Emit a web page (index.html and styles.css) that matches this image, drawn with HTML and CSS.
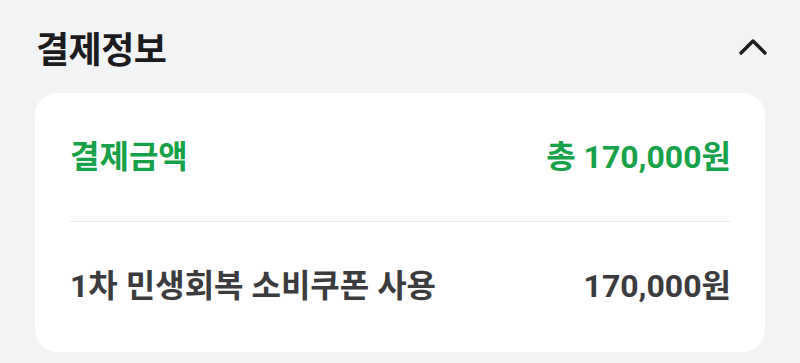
FILE: index.html
```html
<!DOCTYPE html>
<html lang="ko">

<head>
    <meta charset="UTF-8">
    <meta name="viewport" content="width=device-width, initial-scale=1.0">
    <title>결제정보</title>
    <link rel="stylesheet" href="styles.css">
</head>

<body>
    <div id="main">
        <div class="head">
            <div class="head-title">결제정보</div>
            <svg class="chevron" width="30" height="20" viewBox="0 0 30 20">
                <polyline points="3,16 15,4 27,16" fill="none" stroke="#1c1c1e" stroke-width="3.4"
                    stroke-linecap="round" stroke-linejoin="round" />
            </svg>
        </div>
        <div class="card">
            <div class="row total">
                <span>결제금액</span>
                <span>총 170,000원</span>
            </div>
            <div class="row item">
                <span>1차 민생회복 소비쿠폰 사용</span>
                <span>170,000원</span>
            </div>
        </div>
    </div>
</body>

</html>
```

FILE: styles.css
```css
body {
    margin: 0;
    background-color: #f2f3f5;
    font-family: Roboto, "Noto Sans CJK KR", sans-serif;
}

#main {
    display: flex;
    flex-direction: column;
    padding: 0 35px;
}

.head {
    display: flex;
    justify-content: space-between;
    align-items: center;
    height: 93px;
    padding-left: 1px;
}

.head-title {
    font-size: 36px;
    font-weight: bold;
    color: #1c1c1e;
    letter-spacing: -0.5px;
}

.chevron {
    margin-right: -3px;
}

.card {
    background-color: white;
    border-radius: 22px;
    padding: 0 34px 0 35px;
}

.row {
    display: flex;
    justify-content: space-between;
    align-items: center;
    padding: 42px 0;
    line-height: 44px;
    font-size: 32px;
    font-weight: bold;
}

.total {
    color: #17a24a;
    border-bottom: 1px solid #ebebec;
}

.item {
    color: #3c3c3f;
    padding-bottom: 44px;
}
```
